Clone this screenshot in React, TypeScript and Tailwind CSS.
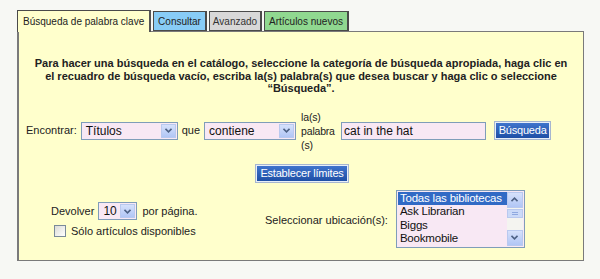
import React from "react";

function Arrow() {
  return (
    <div className="w-[15px] h-full border border-[#b9c9ef] bg-gradient-to-b from-[#d6e1fb] to-[#b1c6f5] flex items-center justify-center shrink-0">
      <svg width="7" height="5" viewBox="0 0 7 5">
        <path d="M0.5 0.8 L3.5 3.8 L6.5 0.8" fill="none" stroke="#4d6185" strokeWidth="1.6" />
      </svg>
    </div>
  );
}

function Select({ value, w }: { value: string; w: string }) {
  return (
    <div className={`${w} h-[18px] border border-[#7f9db9] bg-[#f8e8f4] flex items-stretch p-[1px]`}>
      <div className="flex-1 pl-[3px] text-[12px] leading-[14px] text-[#111] overflow-hidden whitespace-nowrap">{value}</div>
      <Arrow />
    </div>
  );
}

function BlueButton({ label, w }: { label: string; w: string }) {
  return (
    <div className={`${w} h-[19px] border border-[#a6b6d0] p-[1px] bg-[#e8eef8]`}>
      <div className="h-full bg-gradient-to-b from-[#3f74cc] to-[#1f4fa6] text-white text-[11px] leading-[15px] flex items-center justify-center whitespace-nowrap tracking-[-0.2px]">
        {label}
      </div>
    </div>
  );
}

export default function App() {
  const items = ["Todas las bibliotecas", "Ask Librarian", "Biggs", "Bookmobile"];
  return (
    <div className="w-[600px] h-[279px] bg-[#f7f8f4] pt-[10px] pl-[17px] font-['Liberation_Sans',Arial,sans-serif] text-[11px] text-[#222]">
      <div className="flex items-end h-[21px] relative z-10 whitespace-nowrap text-[10px] leading-[13px]">
        <div className="h-[22px] mb-[-1px] w-[134px] bg-[#ffffcc] border-l border-t border-r-2 border-[#4a4a4a] border-r-[#555] pl-[5px] pt-[4px]">
          Búsqueda de palabra clave
        </div>
        <div className="ml-[2px] h-[20px] w-[54px] bg-[#88ccf6] border border-r-2 border-[#4a4a4a] text-center pt-[3px]">
          Consultar
        </div>
        <div className="ml-[2px] h-[20px] w-[53px] bg-[#d8d8d8] border border-r-2 border-[#4a4a4a] text-center pt-[3px] text-[#333]">
          Avanzado
        </div>
        <div className="ml-[2px] h-[20px] w-[85px] bg-[#90d890] border border-r-2 border-[#4a4a4a] text-center pt-[3px]">
          Artículos nuevos
        </div>
      </div>
      <div className="w-[567px] h-[230px] bg-[#ffffcc] border border-l-2 border-[#7a7a7a] flex flex-col">
        <p className="mt-[25px] px-[4px] text-center font-bold text-[11px] leading-[12.5px] text-[#222]">
          Para hacer una búsqueda en el catálogo, seleccione la categoría de búsqueda apropiada, haga clic en
          <br />
          el recuadro de búsqueda vacío, escriba la(s) palabra(s) que desea buscar y haga clic o seleccione
          <br />
          “Búsqueda”.
        </p>
        <div className="mt-[13px] ml-[7px] flex items-center h-[46px]">
          <span className="mr-[4px]">Encontrar:</span>
          <Select value="Títulos" w="w-[97px]" />
          <span className="ml-[4px] mr-[4px]">que</span>
          <Select value="contiene" w="w-[92px]" />
          <div className="ml-[5px] w-[37px] text-[10.5px] leading-[14px] tracking-[-0.2px]">
            la(s)
            <br />
            palabra
            <br />
            (s)
          </div>
          <div className="ml-[3px] w-[145px] h-[18px] border border-[#7f9db9] bg-[#f8e8f4] text-[12px] leading-[16px] pl-[2px] text-[#111]">
            cat in the hat
          </div>
          <div className="ml-[8px]">
            <BlueButton label="Búsqueda" w="w-[57px]" />
          </div>
        </div>
        <div className="mt-[10px] flex justify-center">
          <div className="ml-[2px]">
            <BlueButton label="Establecer límites" w="w-[94px]" />
          </div>
        </div>
        <div className="flex mt-[5px]">
          <div className="ml-[32px] w-[200px] pt-[14px]">
            <div className="flex items-center h-[19px]">
              <span className="mr-[4px]">Devolver</span>
              <Select value="10" w="w-[39px]" />
              <span className="ml-[5px]">por página.</span>
            </div>
            <div className="flex items-center mt-[2px] ml-[3px]">
              <div className="w-[12px] h-[12px] border border-[#7a8a99] bg-gradient-to-br from-[#dcdcd6] to-[#ffffff]" />
              <span className="ml-[5px]">Sólo artículos disponibles</span>
            </div>
          </div>
          <div className="ml-[14px] mt-[2px] flex items-center">
            <span className="mr-[8px] mt-[4px]">Seleccionar ubicación(s):</span>
            <div className="w-[129px] h-[58px] border border-[#7f9db9] bg-[#f8e8f4] flex p-[1px]">
              <div className="flex-1 text-[11.5px] leading-[13.5px] tracking-[-0.2px] text-[#111] overflow-hidden">
                {items.map((it, i) => (
                  <div
                    key={it}
                    className={
                      i === 0
                        ? "bg-[#316ac5] text-white pl-[2px] whitespace-nowrap"
                        : "pl-[2px] whitespace-nowrap"
                    }
                  >
                    {it}
                  </div>
                ))}
              </div>
              <div className="w-[16px] h-full bg-[#f4f4f0] flex flex-col">
                <div className="h-[16px] border border-[#b9c9ef] bg-gradient-to-b from-[#d6e1fb] to-[#b1c6f5] flex items-center justify-center">
                  <svg width="7" height="5" viewBox="0 0 7 5">
                    <path d="M0.5 4.2 L3.5 1.2 L6.5 4.2" fill="none" stroke="#4d6185" strokeWidth="1.6" />
                  </svg>
                </div>
                <div className="h-[9px] mt-[1px] border border-[#b9c9ef] bg-[#cbdaf8] flex items-center justify-center">
                  <div className="w-[6px] h-[3px] border-t border-b border-[#8fa9e0]" />
                </div>
                <div className="flex-1" />
                <div className="h-[16px] border border-[#b9c9ef] bg-gradient-to-b from-[#d6e1fb] to-[#b1c6f5] flex items-center justify-center">
                  <svg width="7" height="5" viewBox="0 0 7 5">
                    <path d="M0.5 0.8 L3.5 3.8 L6.5 0.8" fill="none" stroke="#4d6185" strokeWidth="1.6" />
                  </svg>
                </div>
              </div>
            </div>
          </div>
        </div>
      </div>
    </div>
  );
}
